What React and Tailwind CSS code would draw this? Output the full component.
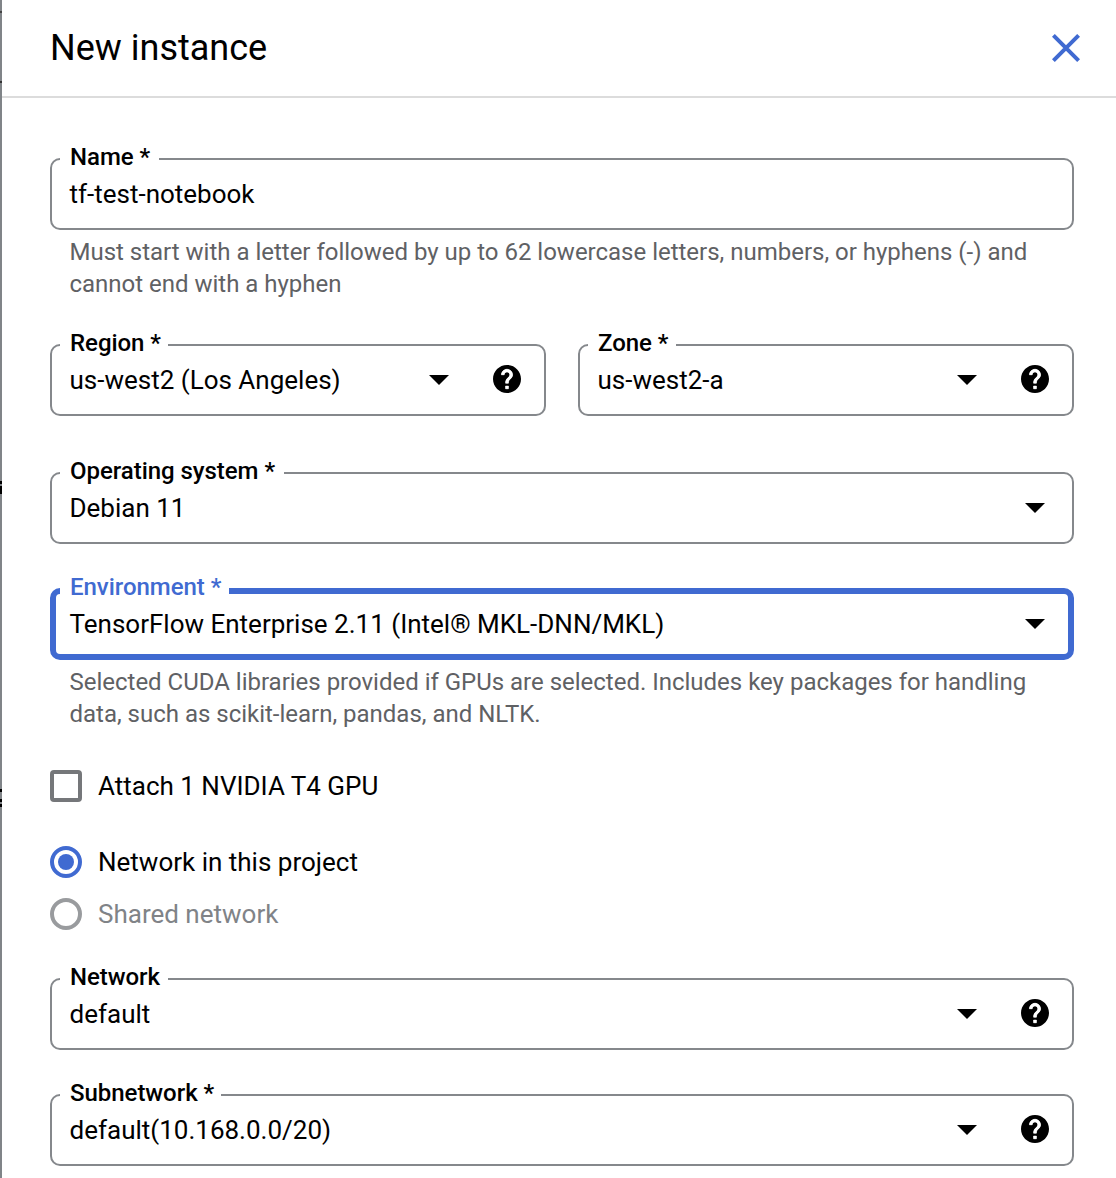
function Arrow() {
  return (
    <svg className="h-[10px] w-5 shrink-0" viewBox="0 0 20 10">
      <path d="M0 0H20L10 10Z" fill="#000" />
    </svg>
  );
}

function Help() {
  return (
    <svg className="mb-[2px] ml-[42px] h-8 w-8 shrink-0" viewBox="1 1 22 22">
      <path
        transform="translate(12 12) scale(.9625) translate(-12 -12)"
        stroke="#000"
        strokeWidth="0"
        d="M12 2C6.48 2 2 6.48 2 12s4.48 10 10 10 10-4.48 10-10S17.52 2 12 2zm1 17h-2v-2h2v2zm2.07-7.75l-.9.92C13.45 12.9 13 13.5 13 15h-2v-.5c0-1.1.45-2.1 1.17-2.83l1.24-1.26c.37-.36.59-.86.59-1.41 0-1.1-.9-2-2-2s-2 .9-2 2H8c0-2.21 1.79-4 4-4s4 1.79 4 4c0 .88-.36 1.68-.93 2.25z"
      />
      <path
        transform="translate(12 12) scale(.9625) translate(-12 -12)"
        fill="#fff"
        stroke="#fff"
        strokeWidth="0.35"
        d="M13 19h-2v-2h2zM15.07 11.25l-.9.92C13.45 12.9 13 13.5 13 15h-2v-.5c0-1.1.45-2.1 1.17-2.83l1.24-1.26c.37-.36.59-.86.59-1.41 0-1.1-.9-2-2-2s-2 .9-2 2H8c0-2.21 1.79-4 4-4s4 1.79 4 4c0 .88-.36 1.68-.93 2.25z"
      />
    </svg>
  );
}

function Field({ label, labelWidth, value, arrow, help, focused }) {
  return (
    <div
      className={`relative flex h-[72px] w-full items-center rounded-[10px] ${
        focused ? "border-[6px] border-[#406ad1] pr-[23px] pl-[13.5px]" : "border-2 border-[#85888c] pl-[17.5px]"
      } ${help ? "pr-[21px]" : focused ? "" : "pr-[27px]"}`}
    >
      <span
        className={`absolute flex h-7 items-center bg-white pl-[10px] text-[24px] leading-7 font-medium tracking-[-0.04px] whitespace-nowrap ${
          focused ? "-top-[21px] left-1 text-[#406ad1]" : "-top-[17px] left-2 text-black"
        } ${labelWidth}`}
      >
        {label}
      </span>
      <span className="flex-1 text-[26px] leading-8 whitespace-nowrap">{value}</span>
      {arrow && <Arrow />}
      {help && <Help />}
    </div>
  );
}

function Hint({ children }) {
  return <p className="mt-[6px] pl-[19.5px] text-[24px] leading-8 tracking-[-0.01px] whitespace-nowrap text-[#5f6164]">{children}</p>;
}

export default function App() {
  return (
    <div className="flex h-[1178px] w-[1116px] overflow-hidden bg-white font-[Roboto,sans-serif] text-black">
      <div className="flex w-[2px] shrink-0 flex-col bg-[#808488]">
        <i className="mt-[11px] h-[2px] bg-[#444]" />
        <i className="mt-[68px] h-[2px] bg-[#333]" />
        <i className="mt-[398px] h-[3px] bg-black" />
        <i className="mt-[2px] h-[8px] bg-black" />
        <i className="mt-[295px] h-[3px] bg-black" />
        <i className="mt-[7px] h-[3px] bg-black" />
        <i className="mt-[2px] h-[3px] bg-black" />
      </div>
      <main className="flex min-w-0 flex-1 flex-col">
        <header className="flex h-[98px] shrink-0 items-center justify-between border-b-2 border-[#dcdcdc] pr-[36px] pl-[48px]">
          <h1 className="text-[36px] leading-10">New instance</h1>
          <svg className="h-7 w-7" viewBox="0 0 28 28" fill="none" stroke="#406ad1" strokeWidth="4">
            <path d="M1.4 1.4L26.6 26.6M26.6 1.4L1.4 26.6" />
          </svg>
        </header>
        <div className="flex flex-col pt-[60px] pr-[42px] pl-[48px]">
          <Field label="Name *" labelWidth="w-[99px]" value="tf-test-notebook" />
          <Hint>
            Must start with a letter followed by up to 62 lowercase letters, numbers, or hyphens (-) and
            <br />
            cannot end with a hyphen
          </Hint>
          <div className="mt-[44px] grid grid-cols-2 gap-8">
            <Field label="Region *" labelWidth="w-[108px]" value="us-west2 (Los Angeles)" arrow help />
            <Field label="Zone *" labelWidth="w-[88px]" value="us-west2-a" arrow help />
          </div>
          <div className="mt-14">
            <Field label="Operating system *" labelWidth="w-[224px]" value="Debian 11" arrow />
          </div>
          <div className="mt-11">
            <Field label="Environment *" labelWidth="w-[169px]" value="TensorFlow Enterprise 2.11 (Intel® MKL-DNN/MKL)" arrow focused />
          </div>
          <Hint>
            Selected CUDA libraries provided if GPUs are selected. Includes key packages for handling
            <br />
            data, such as scikit-learn, pandas, and NLTK.
          </Hint>
          <label className="mt-10 flex h-8 items-center gap-4 text-[26px]">
            <span className="h-8 w-8 rounded-[4px] border-4 border-[#75777a]" />
            <span>Attach 1 NVIDIA T4 GPU</span>
          </label>
          <label className="mt-11 flex h-8 items-center gap-4 text-[26px]">
            <span className="flex h-8 w-8 items-center justify-center rounded-full border-4 border-[#406ad1]">
              <span className="h-4 w-4 rounded-full bg-[#406ad1]" />
            </span>
            <span>Network in this project</span>
          </label>
          <label className="mt-5 flex h-8 items-center gap-4 text-[26px] text-[#808387]">
            <span className="h-8 w-8 rounded-full border-4 border-[#999b9e]" />
            <span>Shared network</span>
          </label>
          <div className="mt-12 flex flex-col gap-11">
            <Field label="Network" labelWidth="w-[108px]" value="default" arrow help />
            <Field label="Subnetwork *" labelWidth="w-[161px]" value="default(10.168.0.0/20)" arrow help />
          </div>
        </div>
      </main>
    </div>
  );
}
